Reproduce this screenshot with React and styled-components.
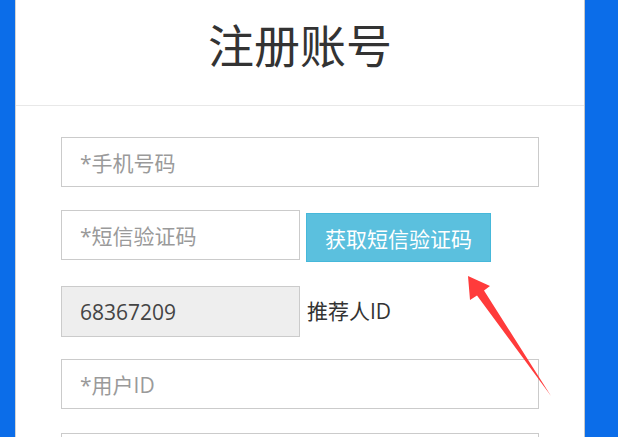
import React from "react";
import styled, { createGlobalStyle } from "styled-components";

const GlobalStyle = createGlobalStyle`
  html, body {
    margin: 0;
    padding: 0;
    background: #0b6de9;
    overflow: hidden;
  }
  body {
    font-family: "Open Sans", "Noto Sans CJK SC", sans-serif;
  }
  * {
    box-sizing: border-box;
  }
`;

const Page = styled.div`
  position: relative;
  width: 618px;
  height: 437px;
  overflow: hidden;
`;

const Card = styled.div`
  margin-left: 15px;
  width: 570px;
  min-height: 437px;
  background: #fff;
  border-left: 1px solid #d4d4d4;
  border-right: 1px solid #c8c8c8;
`;

const Header = styled.div`
  height: 106px;
  padding-top: 17px;
  border-bottom: 1px solid #e8e8e8;
  text-align: center;
`;

const Title = styled.h1`
  margin: 0;
  font-size: 46px;
  line-height: 56px;
  font-weight: 400;
  color: #333;
`;

const Body = styled.div`
  padding: 31px 44px 0 45px;
`;

const Row = styled.div`
  display: flex;
  align-items: flex-start;
  margin-bottom: ${(p) => p.$mb}px;
`;

const Input = styled.div`
  width: ${(p) => p.$w || "478px"};
  height: ${(p) => p.$h || 50}px;
  padding-left: 18px;
  display: flex;
  align-items: center;
  border: 1px solid #cbcbcb;
  background: ${(p) => (p.$readonly ? "#eeeeee" : "#fff")};
  color: ${(p) => (p.$readonly ? "#444" : "#9a9a9a")};
  font-size: 21px;
`;

const SmsButton = styled.button`
  margin: 3px 0 0 6px;
  width: 185px;
  height: 49px;
  padding: 0;
  border: 1px solid #46b8da;
  background: #5bc0de;
  color: #fff;
  font-family: inherit;
  font-size: 21px;
`;

const Label = styled.span`
  margin-left: 7px;
  line-height: 51px;
  font-size: 21px;
  color: #333;
`;

const Arrow = styled.svg`
  position: absolute;
  left: 460px;
  top: 270px;
  pointer-events: none;
`;

export default function App() {
  return (
    <Page>
      <GlobalStyle />
      <Card>
        <Header>
          <Title>注册账号</Title>
        </Header>
        <Body>
          <Row $mb={23}>
            <Input>*手机号码</Input>
          </Row>
          <Row $mb={24}>
            <Input $w="239px">*短信验证码</Input>
            <SmsButton>获取短信验证码</SmsButton>
          </Row>
          <Row $mb={22}>
            <Input $w="239px" $h={51} $readonly>
              68367209
            </Input>
            <Label>推荐人ID</Label>
          </Row>
          <Row $mb={24}>
            <Input>*用户ID</Input>
          </Row>
          <Row $mb={0}>
            <Input />
          </Row>
        </Body>
      </Card>
      <Arrow width="100" height="130" viewBox="0 0 100 130">
        <polygon
          points="8,6 30,16 24,20.5 91,126 17,25.5 10,30"
          fill="#ff3b3b"
        />
      </Arrow>
    </Page>
  );
}
